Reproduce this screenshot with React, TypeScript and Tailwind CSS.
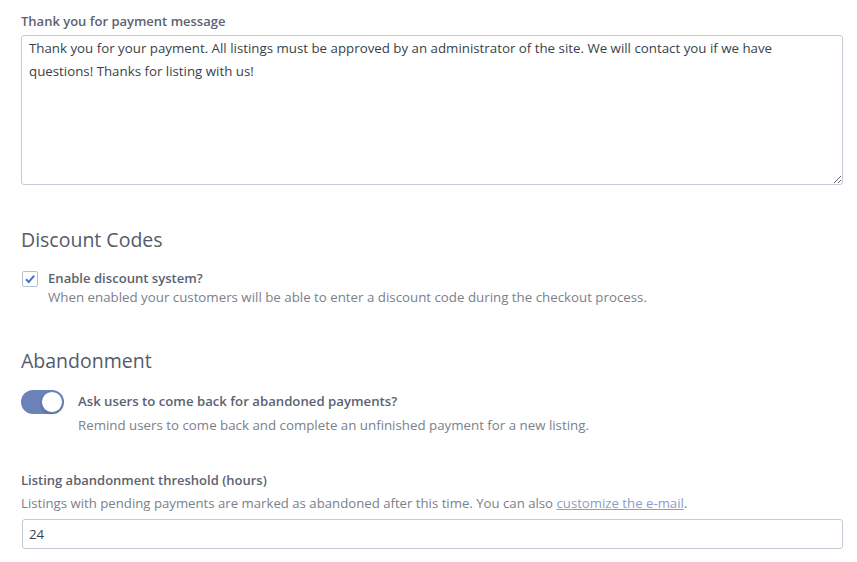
import React from "react";

export default function App() {
  return (
    <div
      className="w-[857px] h-[562px] bg-white overflow-hidden"
      style={{ fontFamily: '"Open Sans", "Noto Sans", sans-serif' }}
    >
      <div className="pl-[21px] pr-[14px] pt-[11px]">
        <label className="block text-[13px] leading-[20px] font-semibold text-[#5b6372]">
          Thank you for payment message
        </label>
        <div className="relative mt-[4px]">
          <textarea
            readOnly
            className="block w-full h-[150px] resize-y rounded-[3px] border border-[#c4c9d6] px-[7px] py-[1px] text-[13.3px] leading-[23px] text-[#3a3f4b] outline-none"
            defaultValue="Thank you for your payment. All listings must be approved by an administrator of the site. We will contact you if we have questions! Thanks for listing with us!"
          />
        </div>

        <h2 className="mt-[42px] text-[19.5px] leading-[26px] text-[#535b6a]">Discount Codes</h2>
        <div className="mt-[15px] flex items-start">
          <div className="mt-[3px] w-[16px] h-[16px] shrink-0 rounded-[2px] border border-[#b8bfcc] bg-white flex items-center justify-center ml-[1px]">
            <svg width="12" height="12" viewBox="0 0 12 12">
              <path d="M2 6.2 L4.8 9 L10.2 2.6" fill="none" stroke="#3f79c6" strokeWidth="2" />
            </svg>
          </div>
          <div className="ml-[10px]">
            <div className="text-[13.1px] leading-[20px] font-semibold text-[#5b6372]">Enable discount system?</div>
            <div className="text-[13.3px] leading-[19px] text-[#7b818b]">
              When enabled your customers will be able to enter a discount code during the checkout process.
            </div>
          </div>
        </div>

        <h2 className="mt-[41px] text-[19.5px] leading-[26px] text-[#535b6a]">Abandonment</h2>
        <div className="mt-[16px] flex items-start">
          <div className="relative w-[43px] h-[24px] shrink-0 rounded-full bg-[#6a82b8]">
            <div className="absolute right-[1px] top-[1px] w-[22px] h-[22px] rounded-full bg-white border border-[#6a82b8] shadow-[0_1px_2px_rgba(0,0,0,0.25)]" />
          </div>
          <div className="ml-[14px] mt-[1px]">
            <div className="text-[13.2px] leading-[21px] font-semibold text-[#5b6372]">
              Ask users to come back for abandoned payments?
            </div>
            <div className="mt-[3px] text-[13.3px] leading-[20px] text-[#7b818b]">
              Remind users to come back and complete an unfinished payment for a new listing.
            </div>
          </div>
        </div>

        <label className="mt-[35px] block text-[13px] leading-[20px] font-semibold text-[#5b6372]">
          Listing abandonment threshold (hours)
        </label>
        <div className="mt-[3px] text-[13.2px] leading-[20px] text-[#7b818b]">
          Listings with pending payments are marked as abandoned after this time. You can also{" "}
          <a className="underline text-[#8d9dc8]" href="#">
            customize the e-mail
          </a>
          .
        </div>
        <input
          readOnly
          value="24"
          className="mt-[6px] ml-[1px] block w-[821px] h-[30px] rounded-[3px] border border-[#c4c9d6] px-[6px] text-[13.3px] text-[#3a3f4b] outline-none"
        />
      </div>
    </div>
  );
}
